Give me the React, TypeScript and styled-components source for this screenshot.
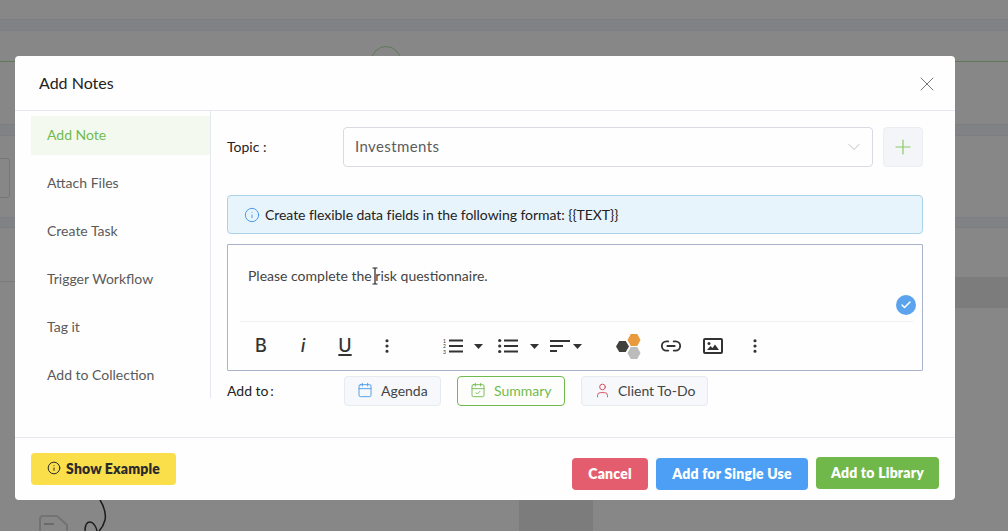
import React from 'react';
import styled, { createGlobalStyle } from 'styled-components';
import { Calendar, CalendarCheck, Info, Link2, User, X, Plus, ChevronDown, EllipsisVertical, Check } from 'lucide-react';

const GlobalStyle = createGlobalStyle`
  html, body {
    margin: 0;
    padding: 0;
    height: 100%;
    overflow: hidden;
  }
  body {
    font-family: Lato, "Liberation Sans", sans-serif;
  }
  * {
    box-sizing: border-box;
  }
`;

// page behind the dialog, dimmed
const Page = styled.div`
  position: relative;
  width: 1008px;
  height: 531px;
  overflow: hidden;
  background: #878787;
  display: flex;
  flex-direction: column;
`;
const Band = styled.div<{ $top: number; $h: number }>`
  margin-top: ${(p) => p.$top}px;
  height: ${(p) => p.$h}px;
  flex: none;
  background: #818286;
  border-top: 1px solid #7d7e82;
  border-bottom: 1px solid #7d7e82;
`;
const GreenLine = styled.div`
  position: relative;
  margin-top: 30px;
  height: 1px;
  flex: none;
  background: #5f7a58;
`;
const GhostCircle = styled.span`
  position: absolute;
  left: 371px;
  top: -15px;
  width: 30px;
  height: 30px;
  border: 1px solid #5f7a58;
  border-radius: 50%;
`;
const GhostInput = styled.div`
  margin-top: 22px;
  margin-left: -10px;
  width: 20px;
  height: 40px;
  flex: none;
  border: 1px solid #767676;
  border-radius: 3px;
`;
const DarkStrip = styled.div`
  margin-top: 49px;
  height: 31px;
  flex: none;
  display: flex;
`;
const LeftRule = styled.div`
  width: 15px;
  height: 1px;
  margin-top: 4px;
  background: #7b7b7b;
`;
const RightBlock = styled.div`
  margin-left: auto;
  width: 60px;
  background: #7c7c7c;
`;
const BottomRow = styled.div`
  margin-top: auto;
  height: 36px;
  display: flex;
  flex: none;
`;
const GhostColumn = styled.div`
  margin-left: 411px;
  width: 74px;
  background: #7c7c7c;
`;
const GhostDrawing = styled.svg`
  margin-left: 38px;
  flex: none;
`;

const Overlay = styled.div`
  position: absolute;
  inset: 0;
  padding: 56px 53px 31px 15px;
`;
const Modal = styled.div`
  height: 100%;
  background: #fefefe;
  border-radius: 4px;
  display: flex;
  flex-direction: column;
`;
const Header = styled.header`
  height: 55px;
  flex: none;
  border-bottom: 1px solid #e6e8ef;
  padding: 0 16px 0 24px;
  display: flex;
  align-items: center;
  justify-content: space-between;
`;
const Title = styled.h1`
  margin: 0;
  font-size: 16px;
  font-weight: 400;
  color: #222;
  position: relative;
  top: -1px;
`;
const CloseButton = styled.button`
  border: 0;
  background: none;
  padding: 0;
  display: flex;
  color: #777;
  position: relative;
  top: 1px;
`;
const Body = styled.div`
  height: 326px;
  flex: none;
  display: flex;
`;
const Sidebar = styled.nav`
  width: 196px;
  height: 287px;
  flex: none;
  border-right: 1px solid #e6e8ef;
  padding: 5px 0 0 16px;
  display: flex;
  flex-direction: column;
  gap: 9px;
`;
const SideItem = styled.div<{ $active?: boolean }>`
  height: 39px;
  flex: none;
  padding: 0 0 2px 16px;
  display: flex;
  align-items: center;
  font-size: 14px;
  color: ${(p) => (p.$active ? '#71bb4e' : '#5a5a5a')};
  background: ${(p) => (p.$active ? '#f3f9ee' : 'transparent')};
`;
const Main = styled.main`
  flex: 1;
  min-width: 0;
  padding: 16px 32px 0 16px;
  display: flex;
  flex-direction: column;
`;
const TopicRow = styled.div`
  height: 40px;
  flex: none;
  display: flex;
  align-items: center;
`;
const FieldLabel = styled.label`
  width: 116px;
  flex: none;
  padding-bottom: 2px;
  font-size: 14px;
  color: #222;
`;
const Select = styled.div`
  width: 530px;
  height: 40px;
  border: 1px solid #d8dbe3;
  border-radius: 4px;
  padding: 0 8px 2px 11px;
  display: flex;
  align-items: center;
  justify-content: space-between;
  font-size: 15px;
  letter-spacing: 0.4px;
  color: #5c5c5c;
  svg {
    margin-top: 2px;
  }
`;
const PlusButton = styled.button`
  width: 40px;
  height: 40px;
  margin-left: 10px;
  padding: 0;
  background: #f4f5f8;
  border: 1px solid #eceef3;
  border-radius: 4px;
  color: #86cc64;
  display: flex;
  align-items: center;
  justify-content: center;
`;
const Alert = styled.div`
  margin-top: 28px;
  height: 39px;
  flex: none;
  background: #e8f4fc;
  border: 1px solid #abd3ea;
  border-radius: 4px;
  padding-left: 16px;
  display: flex;
  align-items: center;
  gap: 5px;
  font-size: 14px;
  letter-spacing: -0.05px;
  color: #222;
  svg {
    color: #4a9bea;
  }
`;
const Editor = styled.div`
  position: relative;
  margin-top: 10px;
  height: 127px;
  flex: none;
  border: 1px solid #a9b3cc;
  border-radius: 1px;
  padding: 0 9px 0 12px;
  display: flex;
  flex-direction: column;
`;
const EditorText = styled.p`
  height: 77px;
  flex: none;
  margin: 0;
  padding: 21px 0 0 8px;
  font-size: 14px;
  line-height: 20px;
  color: #444;
  border-bottom: 1px solid #eef0f3;
`;
const TextCursor = styled.svg`
  position: absolute;
  left: 144px;
  top: 22px;
`;
const CheckBadge = styled.span`
  position: absolute;
  left: 668px;
  top: 50px;
  width: 20px;
  height: 20px;
  border-radius: 50%;
  background: #5ba3ec;
  color: #fff;
  display: flex;
  align-items: center;
  justify-content: center;
`;
const Toolbar = styled.div`
  flex: 1;
  display: flex;
  align-items: center;
`;
const Tool = styled.span<{ $w: number; $ml?: number }>`
  width: ${(p) => p.$w}px;
  margin-left: ${(p) => p.$ml || 0}px;
  flex: none;
  display: flex;
  align-items: center;
  justify-content: center;
  color: #333;
`;
const FormatLetter = styled.span<{ $italic?: boolean; $under?: boolean }>`
  font-family: Inter, "Liberation Sans", sans-serif;
  font-size: 18px;
  line-height: 20px;
  font-weight: 500;
  font-style: ${(p) => (p.$italic ? 'italic' : 'normal')};
  text-decoration: ${(p) => (p.$under ? 'underline' : 'none')};
  text-underline-offset: 2px;
  text-decoration-thickness: 2px;
  color: #333;
`;
const AddRow = styled.div`
  margin-top: 5px;
  height: 30px;
  flex: none;
  display: flex;
  align-items: center;
  gap: 16px;
`;
const AddLabel = styled(FieldLabel)`
  width: 101px;
`;
const Chip = styled.div<{ $on?: boolean; $w: number; $gap: number }>`
  width: ${(p) => p.$w}px;
  height: 30px;
  flex: none;
  padding: 0 0 2px 12px;
  display: flex;
  align-items: center;
  gap: ${(p) => p.$gap}px;
  font-size: 14px;
  border-radius: 4px;
  color: ${(p) => (p.$on ? '#71bb4e' : '#444')};
  background: ${(p) => (p.$on ? '#fdfefc' : '#f6f8fb')};
  border: 1px solid ${(p) => (p.$on ? '#71bb4e' : '#e6eaf1')};
`;
const Footer = styled.footer`
  flex: 1;
  border-top: 1px solid #e6e8ef;
  padding: 15px 16px 10px;
  display: flex;
  justify-content: space-between;
`;
const ExampleButton = styled.button`
  width: 145px;
  height: 32px;
  border: 0;
  padding: 0 0 2px;
  border-radius: 4px;
  background: #fadf4b;
  color: #2b2b2b;
  font-family: inherit;
  font-size: 14px;
  font-weight: 800;
  letter-spacing: 0.15px;
  display: flex;
  align-items: center;
  justify-content: center;
  gap: 5px;
`;
const Actions = styled.div`
  display: flex;
  align-items: flex-end;
  gap: 8px;
`;
const ActionButton = styled.button<{ $bg: string; $w: number; $lift?: boolean }>`
  width: ${(p) => p.$w}px;
  height: 32px;
  margin-bottom: ${(p) => (p.$lift ? 1 : 0)}px;
  border: 0;
  padding: 0 0 2px;
  border-radius: 4px;
  background: ${(p) => p.$bg};
  color: #fff;
  font-family: inherit;
  font-size: 14px;
  font-weight: 800;
  letter-spacing: 0.2px;
`;

const NumberedIcon = () => (
  <svg width="20" height="16" viewBox="0 0 20 16" fill="none">
    <path d="M6 2.500h14M6 8h14M6 13.500h14" stroke="#333" strokeWidth="2" />
    <text x="0" y="5" fontSize="5" fontFamily="Lato" fill="#333">1</text>
    <text x="0" y="10" fontSize="5" fontFamily="Lato" fill="#333">2</text>
    <text x="0" y="15.500" fontSize="5" fontFamily="Lato" fill="#333">3</text>
  </svg>
);
const BulletIcon = () => (
  <svg width="20" height="16" viewBox="0 0 20 16" fill="none">
    <path d="M6 2.500h14M6 8h14M6 13.500h14" stroke="#333" strokeWidth="2" />
    <circle cx="1.700" cy="2.500" r="1.600" fill="#333" />
    <circle cx="1.700" cy="8" r="1.600" fill="#333" />
    <circle cx="1.700" cy="13.500" r="1.600" fill="#333" />
  </svg>
);
const AlignIcon = () => (
  <svg width="20" height="14" viewBox="0 0 20 14" fill="none">
    <path d="M0 2h20M0 7h13M0 12h7" stroke="#333" strokeWidth="2" />
  </svg>
);
const Caret = () => (
  <svg width="9" height="5" viewBox="0 0 9 5">
    <path d="M0 0h9L4.500 5z" fill="#333" />
  </svg>
);
const HexLogo = () => (
  <svg width="25" height="25" viewBox="0 0 25 25">
    <path d="M3.250 7h6.500l3.250 5.500-3.250 5.500h-6.500L0 12.500z" fill="#3f3f3d" />
    <path d="M14.750 0h6.500l3.250 6-3.250 6h-6.500l-3.250-6z" fill="#ea9a3e" />
    <path d="M14.750 13h6.500l3.250 6-3.250 6h-6.500l-3.250-6z" fill="#bcbcbc" />
  </svg>
);
const ImageIcon = () => (
  <svg width="20" height="16" viewBox="0 0 20 16" fill="none">
    <rect x="1" y="1" width="18" height="14" rx="1" stroke="#333" strokeWidth="2" />
    <circle cx="6" cy="5.500" r="1.500" fill="#333" />
    <path d="M4 12l3.500-4 2 2 2.500-3.500 4 5.500z" fill="#333" />
  </svg>
);

export default function App() {
  return (
    <Page>
      <GlobalStyle />
      <Band $top={19} $h={12} />
      <GreenLine>
        <GhostCircle />
      </GreenLine>
      <Band $top={62} $h={12} />
      <GhostInput />
      <Band $top={19} $h={11} />
      <DarkStrip>
        <LeftRule />
        <RightBlock />
      </DarkStrip>
      <BottomRow>
        <GhostDrawing width="70" height="36" viewBox="0 0 70 36" fill="none">
          <path d="M2 36V24a3 3 0 0 1 3-3h14l10 9v6" stroke="#737373" strokeWidth="2" />
          <path d="M6 29h10" stroke="#6a6a6a" strokeWidth="2" />
          <path d="M62 5c5 8 6 16 5 20-1 4-3 8-6 11" stroke="#1c1c1c" strokeWidth="1.500" />
          <path d="M47 36c0-6 2-9 5-9s6 4 7 9" stroke="#1c1c1c" strokeWidth="1.500" />
        </GhostDrawing>
        <GhostColumn />
      </BottomRow>
      <Overlay>
        <Modal>
          <Header>
            <Title>Add Notes</Title>
            <CloseButton aria-label="close">
              <X size={24} strokeWidth={1} />
            </CloseButton>
          </Header>
          <Body>
            <Sidebar>
              <SideItem $active>Add Note</SideItem>
              <SideItem>Attach Files</SideItem>
              <SideItem>Create Task</SideItem>
              <SideItem>Trigger Workflow</SideItem>
              <SideItem>Tag it</SideItem>
              <SideItem>Add to Collection</SideItem>
            </Sidebar>
            <Main>
              <TopicRow>
                <FieldLabel>Topic :</FieldLabel>
                <Select>
                  Investments
                  <ChevronDown size={20} strokeWidth={0.9} color="#aaa" />
                </Select>
                <PlusButton aria-label="add topic">
                  <Plus size={24} strokeWidth={1.2} />
                </PlusButton>
              </TopicRow>
              <Alert>
                <Info size={16} strokeWidth={1.5} />
                {'Create flexible data fields in the following format: {{TEXT}}'}
              </Alert>
              <Editor>
                <EditorText>Please complete the risk questionnaire.</EditorText>
                <TextCursor width="6" height="18" viewBox="0 0 6 18" fill="none">
                  <path d="M0.500 1h5M3 1v16M0.500 17h5" stroke="#222" strokeWidth="1.200" />
                </TextCursor>
                <CheckBadge>
                  <Check size={12} strokeWidth={3} />
                </CheckBadge>
                <Toolbar>
                  <Tool $w={42}><FormatLetter>B</FormatLetter></Tool>
                  <Tool $w={42}><FormatLetter $italic>i</FormatLetter></Tool>
                  <Tool $w={42}><FormatLetter $under>U</FormatLetter></Tool>
                  <Tool $w={42}><EllipsisVertical size={18} strokeWidth={2.2} /></Tool>
                  <Tool $w={20} $ml={35}><NumberedIcon /></Tool>
                  <Tool $w={9} $ml={11}><Caret /></Tool>
                  <Tool $w={20} $ml={15}><BulletIcon /></Tool>
                  <Tool $w={9} $ml={12}><Caret /></Tool>
                  <Tool $w={20} $ml={11}><AlignIcon /></Tool>
                  <Tool $w={9} $ml={3}><Caret /></Tool>
                  <Tool $w={25} $ml={34}><HexLogo /></Tool>
                  <Tool $w={22} $ml={19}><Link2 size={24} strokeWidth={2} /></Tool>
                  <Tool $w={20} $ml={21}><ImageIcon /></Tool>
                  <Tool $w={20} $ml={22}><EllipsisVertical size={18} strokeWidth={2.2} /></Tool>
                </Toolbar>
              </Editor>
              <AddRow>
                <AddLabel>{'Add to\u2009:'}</AddLabel>
                <Chip $w={97} $gap={8}>
                  <Calendar size={16} strokeWidth={1.4} color="#4a9bea" />
                  Agenda
                </Chip>
                <Chip $w={108} $gap={8} $on>
                  <CalendarCheck size={16} strokeWidth={1.4} />
                  Summary
                </Chip>
                <Chip $w={127} $gap={7}>
                  <User size={17} strokeWidth={1.4} color="#d9505f" />
                  Client To-Do
                </Chip>
              </AddRow>
            </Main>
          </Body>
          <Footer>
            <ExampleButton>
              <Info size={14} strokeWidth={1.7} />
              Show Example
            </ExampleButton>
            <Actions>
              <ActionButton $bg="#e45d6e" $w={76}>Cancel</ActionButton>
              <ActionButton $bg="#4c9ff4" $w={152}>Add for Single Use</ActionButton>
              <ActionButton $bg="#70b84a" $w={123} $lift>Add to Library</ActionButton>
            </Actions>
          </Footer>
        </Modal>
      </Overlay>
    </Page>
  );
}
